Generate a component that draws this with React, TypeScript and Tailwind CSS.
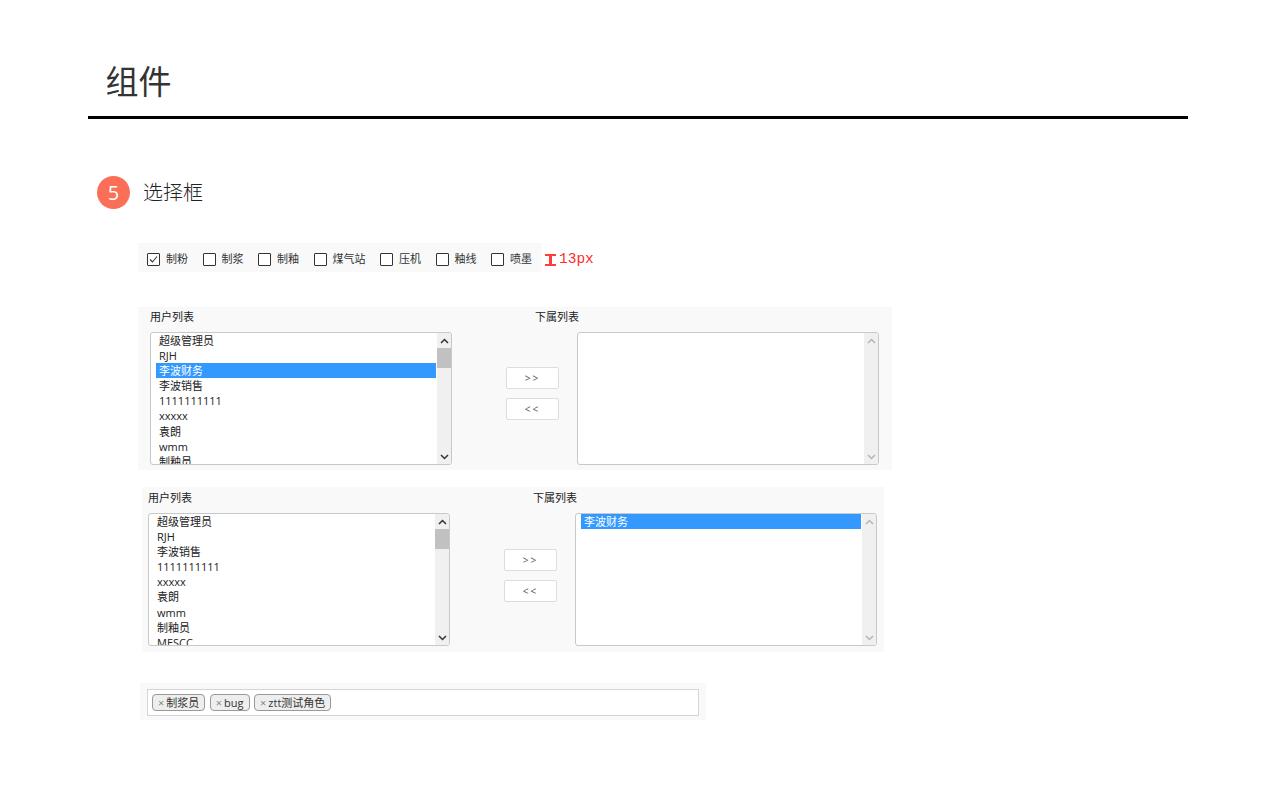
const cjk = "font-['Open_Sans','Noto_Sans_CJK_SC',sans-serif]";

const allUsers = ["超级管理员", "RJH", "李波财务", "李波销售", "1111111111", "xxxxx", "袁朗", "wmm", "制釉员"];
const remainingUsers = ["超级管理员", "RJH", "李波销售", "1111111111", "xxxxx", "袁朗", "wmm", "制釉员", "MESCC"];
const checks = ["制粉", "制浆", "制釉", "煤气站", "压机", "釉线", "喷墨"];
const tags = ["制浆员", "bug", "ztt测试角色"];

function Chevron({ up, active }: { up?: boolean; active: boolean }) {
  return (
    <svg width="9" height="6" viewBox="0 0 9 6" fill="none">
      <path
        d={up ? "M1 5 L4.5 1.5 L8 5" : "M1 1 L4.5 4.5 L8 1"}
        stroke={active ? "#333333" : "#b5b5b5"}
        strokeWidth="1.5"
      />
    </svg>
  );
}

function ListBox({ items, selected, active }: { items: string[]; selected?: string; active: boolean }) {
  return (
    <div className="flex h-[133px] w-[302px] overflow-hidden rounded-[3px] border border-[#c8c8c8] bg-white">
      <div className="h-full flex-1 overflow-hidden pl-[5px] pr-[1px]">
        {items.map((item) => (
          <div
            key={item}
            className={`h-[15.1px] pl-[3px] text-[11px] leading-[15px] whitespace-nowrap ${
              item === selected ? "bg-[#3399ff] text-white" : "text-[#222222]"
            }`}
          >
            {item}
          </div>
        ))}
      </div>
      <div className="flex w-[14px] flex-col bg-[#f0f0f0]">
        <div className="flex h-[15px] items-center justify-center">
          <Chevron up active={active} />
        </div>
        <div className="flex-1">
          {active && <div className="h-[20px] bg-[#c1c1c1]" />}
        </div>
        <div className="flex h-[15px] items-center justify-center">
          <Chevron active={active} />
        </div>
      </div>
    </div>
  );
}

function MoveButton({ label }: { label: string }) {
  return (
    <div className="flex h-[22px] w-[53px] items-center justify-center rounded-[2px] border border-[#dddddd] bg-white text-[10px] tracking-[2px] text-[#555555]">
      {label}
    </div>
  );
}

function TransferPanel({
  left,
  right,
  selected,
  className,
  buttonsClass,
}: {
  left: string[];
  right: string[];
  selected?: string;
  className: string;
  buttonsClass: string;
}) {
  return (
    <div className={`bg-[#f9f9f9] ${className}`}>
      <div className="flex h-[25px] text-[11px] leading-[19px] text-[#222222]">
        <div className="w-[385px]">用户列表</div>
        <div>下属列表</div>
      </div>
      <div className="flex">
        <ListBox items={left} selected={selected} active />
        <div className={`ml-[54px] flex w-[53px] flex-col gap-[9px] ${buttonsClass}`}>
          <MoveButton label=">>" />
          <MoveButton label="<<" />
        </div>
        <div className="ml-[18px]">
          <ListBox items={right} selected={right[0]} active={false} />
        </div>
      </div>
    </div>
  );
}

export default function App() {
  return (
    <div className={`h-[800px] w-[1280px] overflow-hidden bg-white ${cjk}`}>
      {/* Header */}
      <div className="ml-[88px] h-[119px] w-[1100px] border-b-[3px] border-black pl-[17.5px] pt-[60px]">
        <h1 className="text-[33px] leading-[44px] text-[#333333]">组件</h1>
      </div>

      {/* Section title */}
      <div className="ml-[97px] mt-[57px] flex items-center gap-[13px]">
        <div className="flex h-[33px] w-[33px] items-center justify-center rounded-full bg-[#fb6e57] text-[20px] text-white">
          5
        </div>
        <div className="text-[20px] leading-[33px] font-light text-[#222222]">选择框</div>
      </div>

      {/* Checkboxes */}
      <div className="ml-[138px] mt-[34px] flex items-center">
        <div className="flex h-[29px] w-[404px] items-center gap-[14.5px] bg-[#f9f9f9] pl-[9px] pt-[4px]">
          {checks.map((label, i) => (
            <div key={label} className="flex items-center gap-[6px]">
              <div className="flex h-[13px] w-[13px] items-center justify-center rounded-[1px] border border-[#333333] bg-white">
                {i === 0 && (
                  <svg width="11" height="11" viewBox="0 0 11 11" fill="none">
                    <path d="M2 5.5 L4.5 8 L9 2.5" stroke="#333333" strokeWidth="1.1" />
                  </svg>
                )}
              </div>
              <span className="text-[11px] text-[#333333]">{label}</span>
            </div>
          ))}
        </div>
        <svg className="ml-[3px] mt-[4px]" width="11" height="12" viewBox="0 0 11 12" fill="none">
          <path d="M0 1 H11 M0 11 H11" stroke="#ff3b3b" strokeWidth="2" />
          <path d="M5.5 1 V11" stroke="#ff3b3b" strokeWidth="3" />
        </svg>
        <span className="ml-[3px] mt-[4px] font-['Liberation_Mono',monospace] text-[14.5px] text-[#ff2b2b]">13px</span>
      </div>

      {/* Transfer lists */}
      <TransferPanel
        left={allUsers}
        right={[]}
        selected="李波财务"
        buttonsClass="pt-[35px]"
        className="ml-[138px] mt-[35px] h-[163px] w-[754px] pl-[12px]"
      />
      <TransferPanel
        left={remainingUsers}
        right={["李波财务"]}
        buttonsClass="pt-[36px]"
        className="ml-[142px] mt-[17px] h-[165px] w-[742px] pl-[6px] pt-[1px]"
      />

      {/* Tag input */}
      <div className="ml-[140px] mt-[31px] h-[37px] w-[566px] bg-[#f9f9f9] pl-[7px] pt-[6px]">
        <div className="flex h-[27px] w-[552px] items-center gap-[4.5px] border border-[#d5d5d5] bg-white pl-[4px]">
          {tags.map((tag) => (
            <div
              key={tag}
              className="flex h-[17px] items-center gap-[2px] rounded-[4px] border border-[#999999] bg-[#eeeeee] px-[5px] pt-[1px] text-[11px] text-[#333333]"
            >
              <span className="text-[#888888]">×</span>
              {tag}
            </div>
          ))}
        </div>
      </div>
    </div>
  );
}
